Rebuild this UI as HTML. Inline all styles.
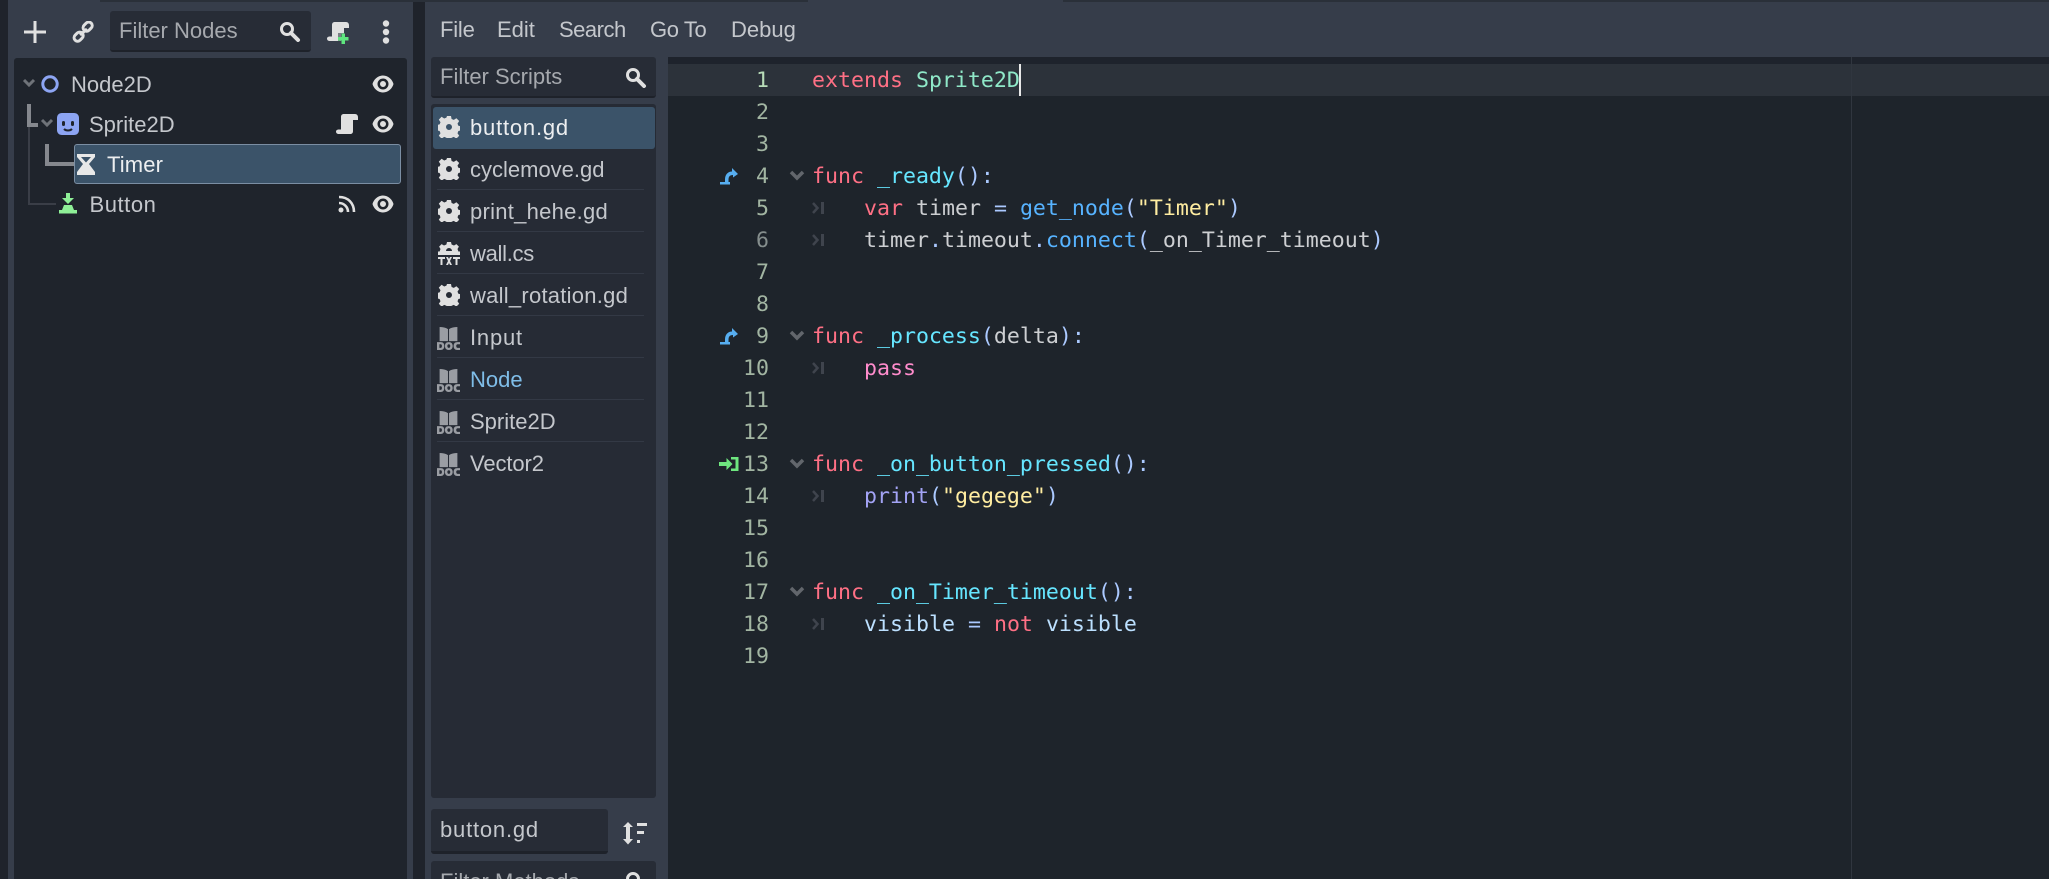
<!DOCTYPE html>
<html><head><meta charset="utf-8"><style>
html,body{margin:0;padding:0;background:#363d4a}
#r{position:relative;width:2049px;height:879px;overflow:hidden;background:#363d4a;font-family:"Liberation Sans",sans-serif;font-size:22px;color:#c4c7cc;filter:blur(.35px)}
#r div,#r svg{position:absolute}
.t{white-space:pre;line-height:40px;height:40px;margin-top:1px}
.c{font-family:"DejaVu Sans Mono","Liberation Mono",monospace;font-size:21.58px;line-height:32px;height:32px;white-space:pre;left:812px;color:#cdcfd2;margin-top:1px}
.n{font-family:"DejaVu Sans Mono","Liberation Mono",monospace;font-size:21.58px;line-height:32px;height:32px;left:729px;width:40px;text-align:right;color:#a2b5a2;margin-top:1px}
.sep{left:437px;width:207px;height:1px;background:#333945}
.k{color:#ff7085}.f{color:#66e6ff}.s{color:#abc9ff}.g{color:#57b3ff}.q{color:#ffeda1}.m{color:#bce0ff}
</style></head><body><div id="r">
<div style="left:0;top:0;width:8px;height:879px;background:#1f232b"></div>
<div style="left:413px;top:0;width:12px;height:879px;background:#1f232b"></div>
<div style="left:100px;top:0;width:708px;height:2px;background:#2a3039"></div>
<div style="left:1063px;top:0;width:986px;height:2px;background:#2a3039"></div>

<svg style="left:24px;top:21px" width="22" height="22" viewBox="0 0 22 22"><path d="M9.5 0h3v9.5H22v3h-9.5V22h-3v-9.500H0v-3h9.500z" fill="#e0e0e0"/></svg>
<svg style="left:72px;top:21px" width="23" height="22" viewBox="0 0 23 22" fill="none" stroke="#e0e0e0" stroke-width="3"><rect x="11" y="2" width="10" height="7" rx="3.5" transform="rotate(-45 16 6)"/><rect x="2" y="12" width="10" height="7" rx="3.5" transform="rotate(-45 7 16)"/><path d="M8 14l7-6"/></svg>
<div style="left:110px;top:11px;width:201px;height:41px;background:#272c36;border-radius:3px;border-bottom:2px solid #1e222a;box-sizing:border-box"></div>
<div class="t" style="left:119px;top:10px;color:#a6a9ae">Filter Nodes</div>
<svg style="left:279px;top:21px" width="22" height="21" viewBox="0 0 22 21" fill="none" stroke="#e0e0e0"><circle cx="8" cy="8" r="5.5" stroke-width="3"/><path d="M12 12l7 7" stroke-width="4" stroke-linecap="round"/></svg>
<svg style="left:327px;top:21px" width="23" height="23" viewBox="0 0 23 23"><path d="M8 1h11c2 0 3 1.500 3 3.500V7h-5v6h-3v7H3c-2 0-3-1-3-2.500 0-1 1-2 3-2h2V4c0-2 1-3 3-3z" fill="#e0e0e0"/><path d="M11 12h10v10H11z" fill="#363d4a" opacity=".6"/><path d="M14.500 12.500h3.500v3.500h3.500v3.500H18V23h-3.500v-3.500H11V16h3.500z" fill="#5fe57f"/></svg>
<svg style="left:380px;top:20px" width="12" height="24" viewBox="0 0 12 24" fill="#e0e0e0"><circle cx="6" cy="3.500" r="3.200"/><circle cx="6" cy="12" r="3.200"/><circle cx="6" cy="20.500" r="3.200"/></svg>

<div style="left:14px;top:58px;width:393px;height:821px;background:#1f242c;border-radius:3px 3px 0 0"></div>
<svg style="left:22px;top:78px" width="14" height="10" viewBox="0 0 14 10"><path d="M2 2l5 5 5-5" fill="none" stroke="#6f7379" stroke-width="3"/></svg>
<svg style="left:41px;top:75px" width="18" height="18" viewBox="0 0 18 18"><circle cx="9" cy="9" r="7.200" fill="none" stroke="#8da5f3" stroke-width="3"/></svg>
<div class="t" style="left:71px;top:64px">Node2D</div>
<svg style="left:372px;top:73px" width="22" height="22" viewBox="0 0 22 22"><path fill-rule="evenodd" d="M11 2.500C5.500 2.500 1.500 7 0.500 11c1 4 5 8.500 10.500 8.500S20.500 15 21.500 11C20.500 7 16.500 2.500 11 2.500zM11 5.500a5.500 5.500 0 1 1 0 11 5.500 5.500 0 0 1 0-11zM11 8a3 3 0 1 0 0 6 3 3 0 0 0 0-6z" fill="#e0e0e0"/></svg>

<div style="left:27px;top:104px;width:3.500px;height:22px;background:#85888e"></div>
<div style="left:27px;top:123px;width:11px;height:3.500px;background:#85888e"></div>
<div style="left:28px;top:127px;width:2px;height:78px;background:#3a3e47"></div>
<div style="left:28px;top:203px;width:28px;height:2px;background:#3a3e47"></div>
<svg style="left:40px;top:118px" width="14" height="10" viewBox="0 0 14 10"><path d="M2 2l5 5 5-5" fill="none" stroke="#6f7379" stroke-width="3"/></svg>
<svg style="left:57px;top:113px" width="22" height="22" viewBox="0 0 22 22"><path fill-rule="evenodd" d="M5 0h12c3 0 5 2 5 5v12c0 3-2 5-5 5H5c-3 0-5-2-5-5V5c0-3 2-5 5-5z" fill="#8da5f3"/><rect x="5" y="8" width="3" height="5" rx="1.500" fill="#1f242c"/><rect x="14" y="8" width="3" height="5" rx="1.500" fill="#1f242c"/><path d="M7 16c2 2 6 2 8 0" fill="none" stroke="#1f242c" stroke-width="2"/></svg>
<div class="t" style="left:89px;top:104px">Sprite2D</div>
<svg style="left:336px;top:113px" width="22" height="22" viewBox="0 0 22 22"><path d="M8 1h11c2 0 3 1.500 3 3.500V7h-5v11c0 2-1 3-3 3H3c-2 0-3-1-3-2.500 0-1 1-2 3-2h2V4c0-2 1-3 3-3z" fill="#e0e0e0"/></svg>
<svg style="left:372px;top:113px" width="22" height="22" viewBox="0 0 22 22"><path fill-rule="evenodd" d="M11 2.500C5.500 2.500 1.500 7 0.500 11c1 4 5 8.500 10.500 8.500S20.500 15 21.500 11C20.500 7 16.500 2.500 11 2.500zM11 5.500a5.500 5.500 0 1 1 0 11 5.500 5.500 0 0 1 0-11zM11 8a3 3 0 1 0 0 6 3 3 0 0 0 0-6z" fill="#e0e0e0"/></svg>

<div style="left:45px;top:144px;width:4px;height:21px;background:#85888e"></div>
<div style="left:45px;top:162px;width:30px;height:4px;background:#85888e"></div>
<div style="left:74px;top:144px;width:327px;height:40px;background:#3b5369;border:1px solid #7b8ea3;border-radius:3px;box-sizing:border-box"></div>
<svg style="left:77px;top:154px" width="18" height="21" viewBox="0 0 18 21"><path d="M0 0h18v3l-6 7 6 8v3H0v-3l6-8-6-7zM4 3l5 5.500L14 3z" fill="#e8e8e8" fill-rule="evenodd"/></svg>
<div class="t" style="left:107px;top:144px;color:#eceef0;letter-spacing:.15px">Timer</div>

<svg style="left:59px;top:193px" width="18" height="21" viewBox="0 0 18 21" fill="#8eef97"><path d="M7 0h4v5h4l-6 6-6-6h4z"/><path d="M5 12h8l2 5h3v3.500H0V17h3z"/></svg>
<div class="t" style="left:89.500px;top:184px;letter-spacing:.55px">Button</div>
<svg style="left:338px;top:195px" width="18" height="18" viewBox="0 0 18 18" fill="none" stroke="#e0e0e0" stroke-width="2.600"><circle cx="3" cy="15" r="2.500" fill="#e0e0e0" stroke="none"/><path d="M1 8c5 0 9 4 9 9M1 2c9 0 15 6 15 15"/></svg>
<svg style="left:372px;top:193px" width="22" height="22" viewBox="0 0 22 22"><path fill-rule="evenodd" d="M11 2.500C5.500 2.500 1.500 7 0.500 11c1 4 5 8.500 10.500 8.500S20.500 15 21.500 11C20.500 7 16.500 2.500 11 2.500zM11 5.500a5.500 5.500 0 1 1 0 11 5.500 5.500 0 0 1 0-11zM11 8a3 3 0 1 0 0 6 3 3 0 0 0 0-6z" fill="#e0e0e0"/></svg>

<div class="t" style="left:440px;top:9px;letter-spacing:-.2px">File</div>
<div class="t" style="left:497px;top:9px">Edit</div>
<div class="t" style="left:559px;top:9px;letter-spacing:-.5px">Search</div>
<div class="t" style="left:650px;top:9px;letter-spacing:-.4px">Go To</div>
<div class="t" style="left:731px;top:9px">Debug</div>

<div style="left:431px;top:57px;width:225px;height:41px;background:#272c36;border-radius:3px;border-bottom:2px solid #1e222a;box-sizing:border-box"></div>
<div class="t" style="left:440px;top:56px;color:#a6a9ae">Filter Scripts</div>
<svg style="left:625px;top:67px" width="22" height="21" viewBox="0 0 22 21" fill="none" stroke="#e0e0e0"><circle cx="8" cy="8" r="5.500" stroke-width="3"/><path d="M12 12l7 7" stroke-width="4" stroke-linecap="round"/></svg>

<div style="left:431px;top:104px;width:225px;height:694px;background:#262b35;border-radius:3px"></div>
<div style="left:433px;top:107px;width:222px;height:42px;background:#3b5369;border-radius:3px"></div>
<div class="sep" style="top:189px"></div><div class="sep" style="top:231px"></div><div class="sep" style="top:273px"></div><div class="sep" style="top:315px"></div><div class="sep" style="top:357px"></div><div class="sep" style="top:399px"></div><div class="sep" style="top:441px"></div>

<svg width="0" height="0"><defs><g id="gear"><path fill-rule="evenodd" d="M9 0h4l.6 3 2.200.9 2.600-1.700 2.800 2.800-1.700 2.600.9 2.200 3 .6v4l-3 .6-.9 2.200 1.700 2.600-2.800 2.800-2.600-1.700-2.200.9-.6 3H9l-.6-3-2.200-.9-2.600 1.700-2.800-2.800 1.700-2.600-.9-2.200-3-.6V9l3-.6.9-2.200-1.700-2.600 2.800-2.800 2.600 1.700 2.200-.9zM11 8a3 3 0 1 0 0 6 3 3 0 0 0 0-6z" fill="#e0e0e0"/></g>
<g id="doc" fill="#9a9da3"><path d="M2.500 0c3 0 6 .6 8 2v11.500h-8zM19.500 0c-3 0-6 .6-8 2v11.500h8z"/><path fill-rule="evenodd" d="M0 14.500h3.500c2.300 0 3.500 1.300 3.500 3.700S5.800 22 3.500 22H0zM2.300 16.500v3.500h1.200c.8 0 1.200-.7 1.200-1.800s-.4-1.700-1.200-1.700zM11.300 14.500c2.400 0 3.700 1.400 3.700 3.700S13.700 22 11.300 22s-3.700-1.400-3.700-3.800 1.300-3.700 3.700-3.700zM11.300 16.500c-.9 0-1.400.6-1.400 1.700s.5 1.800 1.400 1.800 1.400-.7 1.400-1.800-.5-1.700-1.400-1.700z"/><path d="M22 16.500h-2.200c-.9 0-1.400.6-1.400 1.700s.5 1.800 1.400 1.800H22v2h-2.500c-2.400 0-3.600-1.400-3.600-3.800s1.200-3.700 3.600-3.700H22z"/></g></defs></svg>

<svg style="left:438px;top:116px" width="22" height="22" viewBox="0 0 22 22"><use href="#gear"/></svg>
<div class="t" style="left:470px;top:107px;color:#eceef0;letter-spacing:.8px">button.gd</div>
<svg style="left:438px;top:158px" width="22" height="22" viewBox="0 0 22 22"><use href="#gear"/></svg>
<div class="t" style="left:470px;top:149px">cyclemove.gd</div>
<svg style="left:438px;top:200px" width="22" height="22" viewBox="0 0 22 22"><use href="#gear"/></svg>
<div class="t" style="left:470px;top:191px;letter-spacing:.27px">print_hehe.gd</div>
<svg style="left:438px;top:242px" width="22" height="23" viewBox="0 0 22 23"><path fill-rule="evenodd" d="M9 0h4l.6 2.500 2.400 1 2.400-1.400 2.500 2.500-1.400 2.400.9 2.500H22V13H0V9.500h1.600l.9-2.500-1.400-2.400 2.500-2.500L6 3.500l2.400-1zM11 6a3 3 0 0 0-3 3h6a3 3 0 0 0-3-3z" fill="#e0e0e0"/><path d="M0 15h7v2H4.500v6h-2v-6H0zM15 15h7v2h-2.500v6h-2v-6H15zM8 15h2l1 2 1-2h2l-2 4 2 4h-2l-1-2-1 2H8l2-4z" fill="#e0e0e0"/></svg>
<div class="t" style="left:470px;top:233px;letter-spacing:-.3px">wall.cs</div>
<svg style="left:438px;top:284px" width="22" height="22" viewBox="0 0 22 22"><use href="#gear"/></svg>
<div class="t" style="left:470px;top:275px;letter-spacing:.25px">wall_rotation.gd</div>
<svg style="left:437px;top:327px" width="23" height="23" viewBox="0 0 22 22"><use href="#doc"/></svg>
<div class="t" style="left:470px;top:317px;letter-spacing:.8px">Input</div>
<svg style="left:437px;top:369px" width="23" height="23" viewBox="0 0 22 22"><use href="#doc"/></svg>
<div class="t" style="left:470px;top:359px;color:#7fbde8">Node</div>
<svg style="left:437px;top:411px" width="23" height="23" viewBox="0 0 22 22"><use href="#doc"/></svg>
<div class="t" style="left:470px;top:401px">Sprite2D</div>
<svg style="left:437px;top:453px" width="23" height="23" viewBox="0 0 22 22"><use href="#doc"/></svg>
<div class="t" style="left:470px;top:443px;letter-spacing:-.1px">Vector2</div>

<div style="left:431px;top:809px;width:177px;height:45px;background:#272c36;border-radius:3px;border-bottom:3px solid #1e222a;box-sizing:border-box"></div>
<div class="t" style="left:440px;top:809px;letter-spacing:.8px">button.gd</div>
<svg style="left:623px;top:821px" width="24" height="24" viewBox="0 0 24 24" fill="#e0e0e0"><path d="M5 1l5 5H7v12h3l-5 5.500L0 18h3V6H0z"/><rect x="14" y="2" width="10" height="3"/><rect x="14" y="10" width="7" height="3"/><rect x="14" y="19" width="3" height="3"/></svg>
<div style="left:431px;top:861px;width:225px;height:18px;background:#272c36;border-radius:3px 3px 0 0"></div>
<div class="t" style="left:440px;top:861px;color:#a6a9ae">Filter Methods</div>
<svg style="left:625px;top:871px" width="22" height="21" viewBox="0 0 22 21" fill="none" stroke="#e0e0e0"><circle cx="8" cy="8" r="5.500" stroke-width="3"/></svg>

<div style="left:668px;top:57px;width:1381px;height:822px;background:#1e242b;border-radius:4px 0 0 0;overflow:hidden"></div>
<div style="left:668px;top:57px;width:1381px;height:7px;background:#1e232c"></div>
<div style="left:668px;top:64px;width:1381px;height:32px;background:#2c323a"></div>
<div style="left:1851px;top:57px;width:1px;height:822px;background:#30363f"></div>

<div class="n" style="top:64px;color:#b8dcb8">1</div><div class="n" style="top:96px">2</div><div class="n" style="top:128px">3</div><div class="n" style="top:160px">4</div><div class="n" style="top:192px">5</div><div class="n" style="top:224px;color:#858e8d">6</div><div class="n" style="top:256px">7</div><div class="n" style="top:288px">8</div><div class="n" style="top:320px">9</div><div class="n" style="top:352px">10</div><div class="n" style="top:384px">11</div><div class="n" style="top:416px">12</div><div class="n" style="top:448px">13</div><div class="n" style="top:480px">14</div><div class="n" style="top:512px">15</div><div class="n" style="top:544px">16</div><div class="n" style="top:576px">17</div><div class="n" style="top:608px">18</div><div class="n" style="top:640px">19</div>

<svg width="0" height="0"><defs><g id="fold"><path d="M2 2l6 6 6-6" fill="none" stroke="#62666c" stroke-width="3.500"/></g><g id="tab"><path d="M1 1l4.500 5L1 11" fill="none" stroke="#3f444d" stroke-width="2.500"/><rect x="9" y="0" width="3" height="12" fill="#3f444d"/></g><g id="ov"><path d="M12 0l6 6-5 3.500V7c-3 0-4.500 1.500-4.500 4.500v4H5v-4C5 6.500 8 3.500 12 3.500z" fill="#57aef0"/><path d="M0 14h10v2.500H0z" fill="#57aef0"/></g></defs></svg>
<svg style="left:789px;top:170px" width="16" height="11"><use href="#fold"/></svg>
<svg style="left:789px;top:330px" width="16" height="11"><use href="#fold"/></svg>
<svg style="left:789px;top:458px" width="16" height="11"><use href="#fold"/></svg>
<svg style="left:789px;top:586px" width="16" height="11"><use href="#fold"/></svg>
<svg style="left:812px;top:202px" width="13" height="13"><use href="#tab"/></svg>
<svg style="left:812px;top:234px" width="13" height="13"><use href="#tab"/></svg>
<svg style="left:812px;top:362px" width="13" height="13"><use href="#tab"/></svg>
<svg style="left:812px;top:490px" width="13" height="13"><use href="#tab"/></svg>
<svg style="left:812px;top:618px" width="13" height="13"><use href="#tab"/></svg>
<svg style="left:720px;top:168px" width="18" height="17"><use href="#ov"/></svg>
<svg style="left:720px;top:328px" width="18" height="17"><use href="#ov"/></svg>
<svg style="left:719px;top:456px" width="20" height="16" viewBox="0 0 20 16"><path d="M0 6h7.500V2l6 6-6 6V10H0z" fill="#6ee67f"/><path d="M12 1h7.500v14H12v-2.500h4.500v-9H12z" fill="#6ee67f"/></svg>

<div class="c" style="top:64px"><span class="k">extends</span> <span style="color:#8fe8c8">Sprite2D</span></div>
<div style="left:1019px;top:64px;width:1.500px;height:32px;background:#e8e8e8"></div>
<div class="c" style="top:160px"><span class="k">func</span> <span class="f">_ready</span><span class="s">():</span></div>
<div class="c" style="top:192px;left:864px"><span class="k">var</span> timer <span class="s">=</span> <span class="g">get_node</span><span class="s">(</span><span class="q">"Timer"</span><span class="s">)</span></div>
<div class="c" style="top:224px;left:864px">timer<span class="s">.</span>timeout<span class="s">.</span><span class="g">connect</span><span class="s">(</span>_on_Timer_timeout<span class="s">)</span></div>
<div class="c" style="top:320px"><span class="k">func</span> <span class="f">_process</span><span class="s">(</span>delta<span class="s">):</span></div>
<div class="c" style="top:352px;left:864px;color:#ff8ccc">pass</div>
<div class="c" style="top:448px"><span class="k">func</span> <span class="f">_on_button_pressed</span><span class="s">():</span></div>
<div class="c" style="top:480px;left:864px"><span style="color:#a3a3f5">print</span><span class="s">(</span><span class="q">"gegege"</span><span class="s">)</span></div>
<div class="c" style="top:576px"><span class="k">func</span> <span class="f">_on_Timer_timeout</span><span class="s">():</span></div>
<div class="c" style="top:608px;left:864px"><span class="m">visible</span> <span class="s">=</span> <span class="k">not</span> <span class="m">visible</span></div>
</div></body></html>
